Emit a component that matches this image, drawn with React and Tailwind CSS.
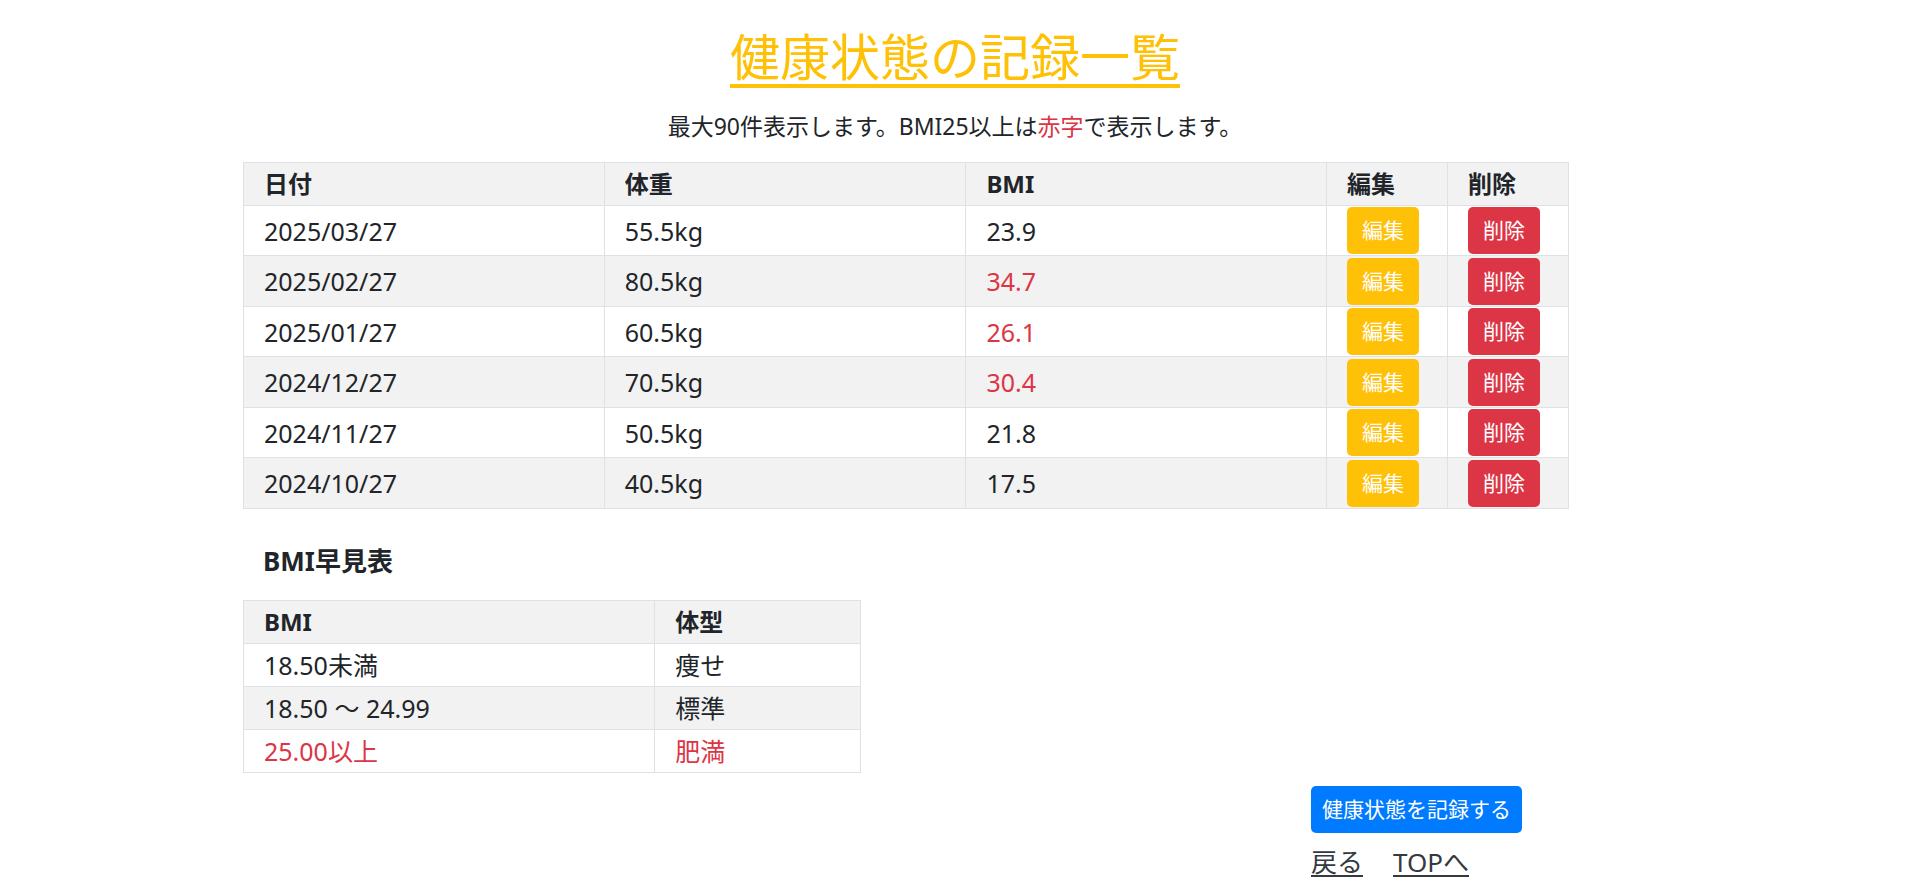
import React from 'react';

const records = [
    { date: '2025/03/27', weight: '55.5kg', bmi: '23.9' },
    { date: '2025/02/27', weight: '80.5kg', bmi: '34.7' },
    { date: '2025/01/27', weight: '60.5kg', bmi: '26.1' },
    { date: '2024/12/27', weight: '70.5kg', bmi: '30.4' },
    { date: '2024/11/27', weight: '50.5kg', bmi: '21.8' },
    { date: '2024/10/27', weight: '40.5kg', bmi: '17.5' },
];

const bmiGuide = [
    { range: '18.50未満', type: '痩せ' },
    { range: '18.50 〜 24.99', type: '標準' },
    { range: '25.00以上', type: '肥満', over: true },
];

const cell = 'border border-[#dee2e6] px-[20px] py-0 text-left align-middle';

export default function App() {
    return (
        <div className="min-h-screen bg-white text-[#212529] font-['Noto_Sans','Noto_Sans_CJK_JP',sans-serif]">
            {/* タイトル */}
            <div className="pt-[27px] text-center">
                <h1 className="text-[50px] leading-[60px] text-[#ffc107] underline decoration-[4px] underline-offset-[8px]">
                    健康状態の記録一覧
                </h1>
                <p className="mt-[21px] text-[23px] leading-[36px]">
                    最大90件表示します。BMI25以上は<span className="text-[#dc3545]">赤字</span>で表示します。
                </p>
            </div>

            <div className="pl-[243px] mt-[18px]">
                {/* 記録一覧 */}
                <table className="w-[1326px] border-collapse text-[25px] leading-[36px]">
                    <thead>
                        <tr className="h-[43px] bg-[#f2f2f2] text-[24px] font-bold">
                            <th className={`${cell} w-[361px]`}>日付</th>
                            <th className={`${cell} w-[362px]`}>体重</th>
                            <th className={`${cell} w-[361px]`}>BMI</th>
                            <th className={`${cell} w-[121px]`}>編集</th>
                            <th className={`${cell} w-[121px]`}>削除</th>
                        </tr>
                    </thead>
                    <tbody>
                        {records.map((r, i) => (
                            <tr key={r.date} className={i % 2 === 1 ? 'h-[51px] bg-[#f2f2f2]' : 'h-[50px] bg-white'}>
                                <td className={cell}>{r.date}</td>
                                <td className={cell}>{r.weight}</td>
                                <td className={`${cell} ${parseFloat(r.bmi) >= 25 ? 'text-[#dc3545]' : ''}`}>{r.bmi}</td>
                                <td className={cell}>
                                    <button className="flex h-[47px] w-[72px] items-center justify-center rounded-[5px] bg-[#ffc107] text-[21px] leading-none text-white">
                                        編集
                                    </button>
                                </td>
                                <td className={cell}>
                                    <button className="flex h-[47px] w-[72px] items-center justify-center rounded-[5px] bg-[#dc3545] text-[21px] leading-none text-white">
                                        削除
                                    </button>
                                </td>
                            </tr>
                        ))}
                    </tbody>
                </table>

                {/* BMI早見表 */}
                <h2 className="mt-[34px] pl-[20px] text-[26px] leading-[36px] font-bold">BMI早見表</h2>
                <table className="mt-[21px] w-[618px] border-collapse text-[25px] leading-[36px]">
                    <thead>
                        <tr className="h-[43px] bg-[#f2f2f2] text-[24px] font-bold">
                            <th className={`${cell} w-[412px]`}>BMI</th>
                            <th className={`${cell} w-[206px]`}>体型</th>
                        </tr>
                    </thead>
                    <tbody>
                        {bmiGuide.map((g, i) => (
                            <tr key={g.range} className={`h-[43px] ${i % 2 === 1 ? 'bg-[#f2f2f2]' : 'bg-white'} ${g.over ? 'text-[#dc3545]' : ''}`}>
                                <td className={cell}>{g.range}</td>
                                <td className={cell}>{g.type}</td>
                            </tr>
                        ))}
                    </tbody>
                </table>
            </div>

            {/* 操作 */}
            <div className="pl-[1311px] mt-[13px]">
                <button className="h-[47px] rounded-[5px] bg-[#007bff] px-[11px] text-[21px] leading-none text-white">
                    健康状態を記録する
                </button>
                <div className="mt-[12px] flex gap-[30px] text-[26px] leading-[34px] text-[#343a40]">
                    <a href="#" className="underline underline-offset-[3px]">戻る</a>
                    <a href="#" className="underline underline-offset-[3px]">TOPへ</a>
                </div>
            </div>
        </div>
    );
}
